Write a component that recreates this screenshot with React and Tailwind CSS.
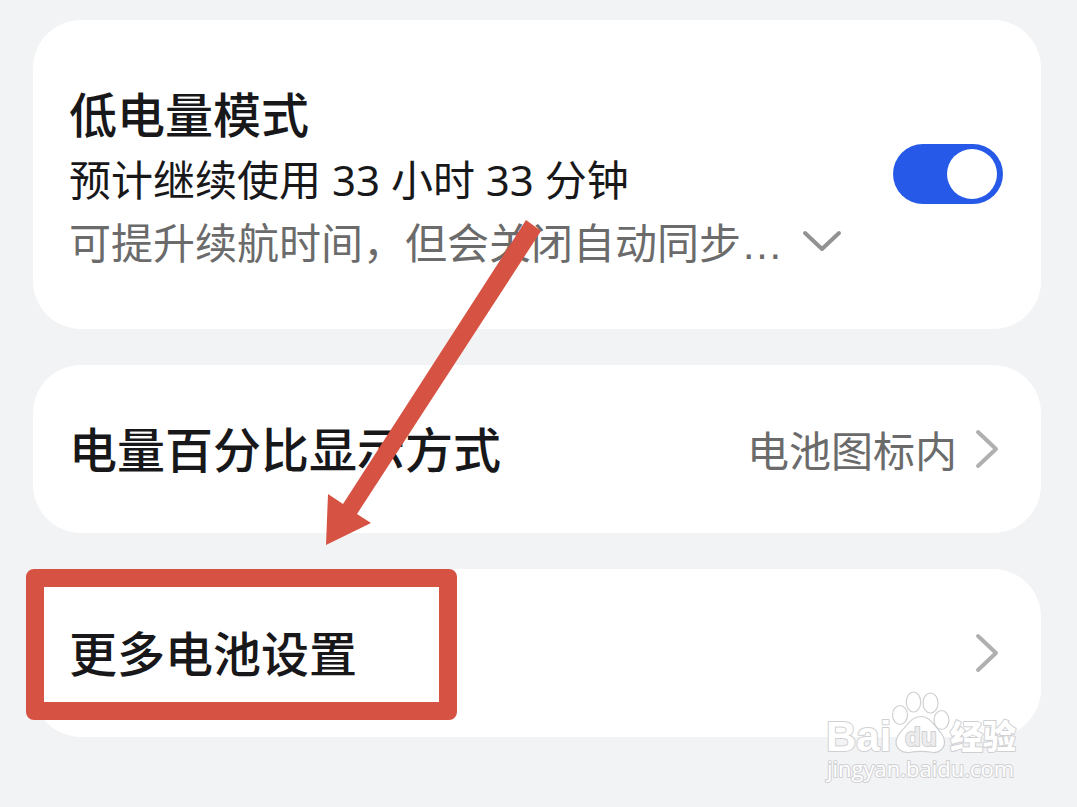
import React, { useState } from "react";

const ChevronRight = () => (
  <svg width="32" height="44" viewBox="0 0 32 44" fill="none" className="shrink-0" aria-hidden="true">
    <path d="M7 5L25 22L7 39" stroke="#b0b0b0" strokeWidth="4" strokeLinecap="round" strokeLinejoin="round" />
  </svg>
);

const ChevronDown = () => (
  <svg width="44" height="28" viewBox="0 0 44 28" fill="none" aria-hidden="true">
    <path d="M6 6L23 22L40 6" stroke="#929292" strokeWidth="4" strokeLinecap="round" strokeLinejoin="round" />
  </svg>
);

// Red pointer drawn over the cards
const Arrow = () => (
  <svg
    width="216"
    height="326"
    viewBox="0 0 216 326"
    className="pointer-events-none absolute left-[326px] top-[220px]"
    aria-hidden="true"
  >
    <path d="M200 0L215 11L31 294L45 303L0 325L2 274L17 284Z" fill="#d65343" />
  </svg>
);

const Watermark = () => (
  <svg
    width="200"
    height="98"
    viewBox="0 0 200 98"
    className="pointer-events-none absolute right-[54px] bottom-[20px]"
    role="img"
    aria-label="Baidu 经验 jingyan.baidu.com"
  >
    <g fill="#ffffff" stroke="#d0d0d2" strokeWidth="1.2">
      <ellipse cx="77" cy="26" rx="7.5" ry="9.5" />
      <ellipse cx="90.5" cy="13" rx="7.2" ry="10" />
      <ellipse cx="107.5" cy="14" rx="7.5" ry="10" />
      <ellipse cx="118.5" cy="31" rx="7.5" ry="9.5" />
      <path d="M98 27.5C105 27.5 109 33 113 38C117 43 121.5 46 121.5 53C121.5 60 116 64 110 63.500C102 62 94 62 86 63.500C79 64 73 60 73 53C73 46 79 42 83 37C87 32 91 27.500 98 27.500Z" />
    </g>
    <g className="[paint-order:stroke]" fill="#ffffff" stroke="#d0d0d2" strokeWidth="2" strokeLinejoin="round">
      <text x="3" y="62" fontSize="42" fontWeight="700" fontFamily="Liberation Sans, sans-serif">Bai</text>
      <text x="82" y="57" fontSize="26" fontWeight="700" fill="#ececee" fontFamily="Liberation Sans, sans-serif">du</text>
      <text x="127" y="60" fontSize="33" fontWeight="900" fontFamily="Noto Sans CJK SC, sans-serif">经验</text>
      <text x="4" y="88" fontSize="22" fontWeight="500" fontFamily="Open Sans, Noto Sans, sans-serif">jingyan.baidu.com</text>
    </g>
  </svg>
);

export default function App() {
  const [lowPower, setLowPower] = useState(true);
  const [expanded, setExpanded] = useState(false);

  return (
    <main
      lang="zh-CN"
      className="relative min-h-screen bg-[#f2f3f5] py-5 pr-9 pl-[33px] font-['Noto_Sans_CJK_SC',sans-serif] text-[#18181a]"
    >
      <div className="flex flex-col gap-9">
        {/* Low power mode */}
        <section className="flex items-center justify-between rounded-[48px] bg-white pt-14 pb-[57px] pr-[38px] pl-9">
          <div>
            <label htmlFor="lowPower" className="block text-[48px] leading-[72px] font-medium">
              低电量模式
            </label>
            <p className="h-[62px] font-['Noto_Sans','Noto_Sans_CJK_SC',sans-serif] text-[42px] leading-[64px]">
              预计继续使用 33 小时 33 分钟
            </p>
            <div className="flex h-[62px] items-center gap-4 text-[42px] leading-[62px] text-[#6b6b6b]">
              <p className="whitespace-nowrap">
                可提升续航时间，但会关闭自动同步
                <span className="font-['Liberation_Sans',sans-serif] leading-none">…</span>
              </p>
              <button
                type="button"
                aria-label="展开"
                aria-expanded={expanded}
                onClick={() => setExpanded(!expanded)}
              >
                <ChevronDown />
              </button>
            </div>
          </div>
          <input
            id="lowPower"
            type="checkbox"
            role="switch"
            checked={lowPower}
            onChange={(e) => setLowPower(e.target.checked)}
            className="flex h-[60px] w-[110px] shrink-0 cursor-pointer appearance-none items-center rounded-full bg-gray-300 px-[6px] before:size-[50px] before:rounded-full before:bg-white checked:justify-end checked:bg-[#2759e8]"
          />
        </section>

        {/* Percentage display */}
        <button
          type="button"
          className="flex h-[168px] items-center justify-between rounded-[48px] bg-white pr-[38px] pl-9"
        >
          <span className="pb-1 text-[48px] leading-[72px] font-medium">电量百分比显示方式</span>
          <span className="flex items-center gap-3.5 text-[42px] leading-[62px] text-[#6b6b6b]">
            电池图标内
            <ChevronRight />
          </span>
        </button>

        {/* More settings */}
        <div className="relative flex flex-col">
          <button
            type="button"
            className="flex h-[168px] items-center justify-between rounded-[48px] bg-white pr-[38px] pl-9"
          >
            <span className="pb-1 text-[48px] leading-[72px] font-medium">更多电池设置</span>
            <ChevronRight />
          </button>
          <div className="pointer-events-none absolute top-0 -left-[7px] h-[151px] w-[431px] rounded-lg border-[18px] border-[#d65343]" />
        </div>
      </div>

      <Arrow />
      <Watermark />
    </main>
  );
}
